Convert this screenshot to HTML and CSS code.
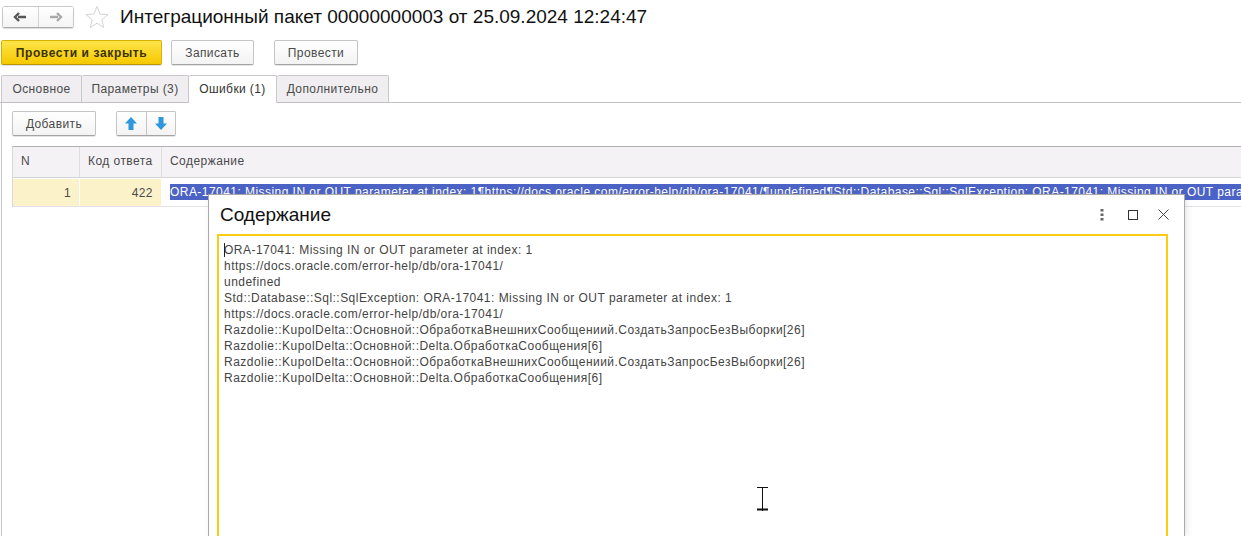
FILE: index.html
```html
<!DOCTYPE html>
<html lang="ru">
<head>
<meta charset="utf-8">
<title>Интеграционный пакет</title>
<link rel="stylesheet" href="styles.css">
</head>
<body>
<div class="page">
  <header class="titlebar">
    <div class="navgroup">
      <button class="navbtn"><svg width="14" height="12" viewBox="0 0 14 12"><path d="M13 6H5M6 2L2 6l4 4" fill="none" stroke="#555" stroke-width="2.4"/></svg></button>
      <button class="navbtn navbtn-off"><svg width="14" height="12" viewBox="0 0 14 12"><path d="M1 6h8M8 2l4 4-4 4" fill="none" stroke="#aaa" stroke-width="2.4"/></svg></button>
    </div>
    <svg class="star" width="24" height="24" viewBox="0 0 24 24"><path d="M12 1.5l3 7.6 8 .5-6.200 5.100 2 7.900L12 18.200 5.200 22.600l2-7.900L1 9.600l8-.5z" fill="#fff" stroke="#d4d4d4"/></svg>
    <h1 class="title">Интеграционный пакет 00000000003 от 25.09.2024 12:24:47</h1>
  </header>
  <div class="commandbar">
    <button class="btn btn-primary">Провести и закрыть</button>
    <button class="btn btn-save">Записать</button>
    <button class="btn btn-post">Провести</button>
  </div>
  <nav class="tabs">
    <div class="tab tab-a">Основное</div>
    <div class="tab tab-b">Параметры (3)</div>
    <div class="tab tab-c tab-active">Ошибки (1)</div>
    <div class="tab tab-d">Дополнительно</div>
  </nav>
  <main class="panel">
    <div class="toolbar">
      <button class="btn btn-add">Добавить</button>
      <div class="arrows">
        <button class="arrowbtn"><svg width="12" height="13" viewBox="0 0 12 13"><path d="M6 0l6 6.500H8.500V13h-5V6.500H0z" fill="#2f97dc"/></svg></button>
        <button class="arrowbtn"><svg width="12" height="13" viewBox="0 0 12 13"><path d="M6 13L0 6.500h3.500V0h5v6.500H12z" fill="#2f97dc"/></svg></button>
      </div>
    </div>
    <div class="grid">
      <div class="grid-head">
        <div class="cell col-n">N</div>
        <div class="cell col-code">Код ответа</div>
        <div class="cell col-text">Содержание</div>
      </div>
      <div class="grid-row">
        <div class="cell col-n cell-num">1</div>
        <div class="cell col-code cell-num">422</div>
        <div class="cell col-text cell-sel"><span class="selected">ORA-17041: Missing IN or OUT parameter at index: 1¶https://docs.oracle.com/error-help/db/ora-17041/¶undefined¶Std::Database::Sql::SqlException: ORA-17041: Missing IN or OUT parameter at index: 1¶https://docs.oracle.com/error-help/db/ora-17041/</span></div>
      </div>
    </div>
  </main>
</div>
<section class="modal">
  <div class="modal-head">
    <h2 class="modal-title">Содержание</h2>
    <div class="modal-ctrls">
      <svg class="ctrl-dots" width="4" height="12" viewBox="0 0 4 12"><path d="M0.500 0h3v2.500h-3zM0.500 4.500h3v2.500h-3zM0.500 9h3v2.500h-3z" fill="#666"/></svg>
      <svg width="10" height="10" viewBox="0 0 10 10"><rect x="0.500" y="0.500" width="9" height="9" fill="none" stroke="#333"/></svg>
      <svg width="11" height="11" viewBox="0 0 11 11"><path d="M0.500 0.500l10 10M10.500 0.500l-10 10" fill="none" stroke="#444"/></svg>
    </div>
  </div>
  <div class="editor">
    <div class="editor-text"><span class="caret"></span>ORA-17041: Missing IN or OUT parameter at index: 1
https://docs.oracle.com/error-help/db/ora-17041/
undefined
Std::Database::Sql::SqlException: ORA-17041: Missing IN or OUT parameter at index: 1
https://docs.oracle.com/error-help/db/ora-17041/
Razdolie::KupolDelta::Основной::ОбработкаВнешнихСообщениий.СоздатьЗапросБезВыборки[26]
Razdolie::KupolDelta::Основной::Delta.ОбработкаСообщения[6]
Razdolie::KupolDelta::Основной::ОбработкаВнешнихСообщениий.СоздатьЗапросБезВыборки[26]
Razdolie::KupolDelta::Основной::Delta.ОбработкаСообщения[6]</div>
  </div>
</section>
<svg class="ibeam" width="11" height="24" viewBox="0 0 11 24"><path d="M0 .5h11M5.500 0v24" fill="none" stroke="#111"/><path d="M0 22.500h11" stroke="#111" stroke-width="2"/></svg>
</body>
</html>
```
FILE: styles.css
```css
* { box-sizing: border-box; }
html, body { margin: 0; padding: 0; height: 536px; overflow: hidden; background: #fff; }
body { font-family: "Liberation Sans", Arial, sans-serif; font-size: 12px; color: #4a4a4a; position: relative; }
button { font: inherit; color: inherit; padding: 0; }
.page { display: flex; flex-direction: column; width: 1241px; height: 536px; }
.titlebar { display: flex; align-items: center; height: 34px; padding: 6px 0 6px 2px; }
.navgroup { display: flex; flex: none; width: 72px; height: 22px; border: 1px solid #c8c8c8; border-bottom-color: #aaa; border-radius: 3px; box-shadow: 0 1px 1px #ddd; }
.navbtn { flex: 1; display: flex; align-items: center; justify-content: center; border: 0; background: linear-gradient(#fff, #f4f4f4); }
.navbtn-off { border-left: 1px solid #d4d4d4; }
.star { margin-left: 11px; flex: none; }
.title { margin: 0 0 0 11px; font-size: 19px; font-weight: 400; color: #111; white-space: nowrap; }
.commandbar { display: flex; height: 25px; margin-top: 6px; padding-left: 1px; }
.btn { height: 25px; border: 1px solid #c4c4c4; border-bottom-color: #a4a4a4; border-radius: 2px; background: linear-gradient(#fff, #f3f3f3); box-shadow: 0 1px 0 #e4e4e4; letter-spacing: .4px; white-space: nowrap; }
.btn-primary { width: 161px; color: #3b3300; font-weight: 700; letter-spacing: .63px; background: linear-gradient(#ffe54a, #f5c800); border-color: #d9b100; border-bottom-color: #b89600; }
.btn-save { width: 83px; margin-left: 9px; }
.btn-post { width: 84px; margin-left: 20px; }
.tabs { display: flex; height: 28px; margin-top: 10px; padding-left: 1px; border-bottom: 1px solid #c0c0c0; }
.tab { height: 28px; line-height: 26px; text-align: center; border: 1px solid #c8c8c8; border-left: 0; border-bottom-color: #c0c0c0; border-radius: 2px 2px 0 0; background: #f0eef1; letter-spacing: .4px; }
.tab-a { width: 81px; border-left: 1px solid #c8c8c8; }
.tab-b { width: 107px; }
.tab-c { width: 88px; }
.tab-d { width: 112px; }
.tab-active { background: #fff; border-bottom-color: #fff; color: #333; }
.panel { flex: 1; border-left: 1px solid #c4c4c4; margin-left: 1px; padding: 8px 0 0 10px; }
.toolbar { display: flex; height: 25px; }
.btn-add { width: 84px; }
.arrows { display: flex; width: 60px; margin-left: 20px; height: 25px; border: 1px solid #c4c4c4; border-bottom-color: #a4a4a4; border-radius: 2px; box-shadow: 0 1px 0 #e4e4e4; }
.arrowbtn { flex: 1; display: flex; align-items: center; justify-content: center; border: 0; background: linear-gradient(#fff, #f3f3f3); }
.arrowbtn + .arrowbtn { border-left: 1px solid #c4c4c4; }
.grid { margin-top: 10px; border-top: 1px solid #b0b0b0; border-left: 1px solid #d8d8d8; }
.grid-head { display: flex; height: 31px; background: #f5f2f6; border-bottom: 1px solid #d4d4d4; }
.grid-row { display: flex; height: 29px; padding-top: 1px; border-bottom: 1px solid #e4e2e6; }
.cell { line-height: 28px; padding: 0 8px; letter-spacing: .45px; white-space: nowrap; overflow: hidden; }
.col-n { width: 67px; border-right: 1px solid #dedede; }
.col-code { width: 82px; border-right: 1px solid #dedede; }
.col-text { flex: 1; }
.cell-num { text-align: right; background: #fbf2ca; border-right-color: #fff; }
.selected { display: inline-block; height: 16px; line-height: 16px; background: #4b63c4; color: #fff; vertical-align: 0; }
.cell-sel { line-height: 26px; }
.modal { position: absolute; left: 208px; top: 194px; width: 977px; height: 342px; background: #fff; border: 1px solid #a8a8a8; border-bottom: 0; box-shadow: 2px 0 6px rgba(120,110,140,.18); padding: 0 16px 0 8px; }
.modal-head { display: flex; align-items: center; justify-content: space-between; height: 39px; }
.modal-title { margin: 0 0 0 3px; font-size: 19px; font-weight: 400; color: #111; }
.modal-ctrls { display: flex; align-items: center; gap: 20px; margin-right: -1px; }
.ctrl-dots { margin-right: 4px; }
.editor { height: 303px; border: 2px solid #fccc13; border-bottom: 0; padding: 6px 5px; }
.editor-text { position: relative; font-size: 12px; line-height: 16px; color: #444; white-space: pre; letter-spacing: .47px; }
.caret { position: absolute; left: 0; top: 1px; width: 1px; height: 14px; background: #222; }
.ibeam { position: absolute; left: 757px; top: 487px; }
```
